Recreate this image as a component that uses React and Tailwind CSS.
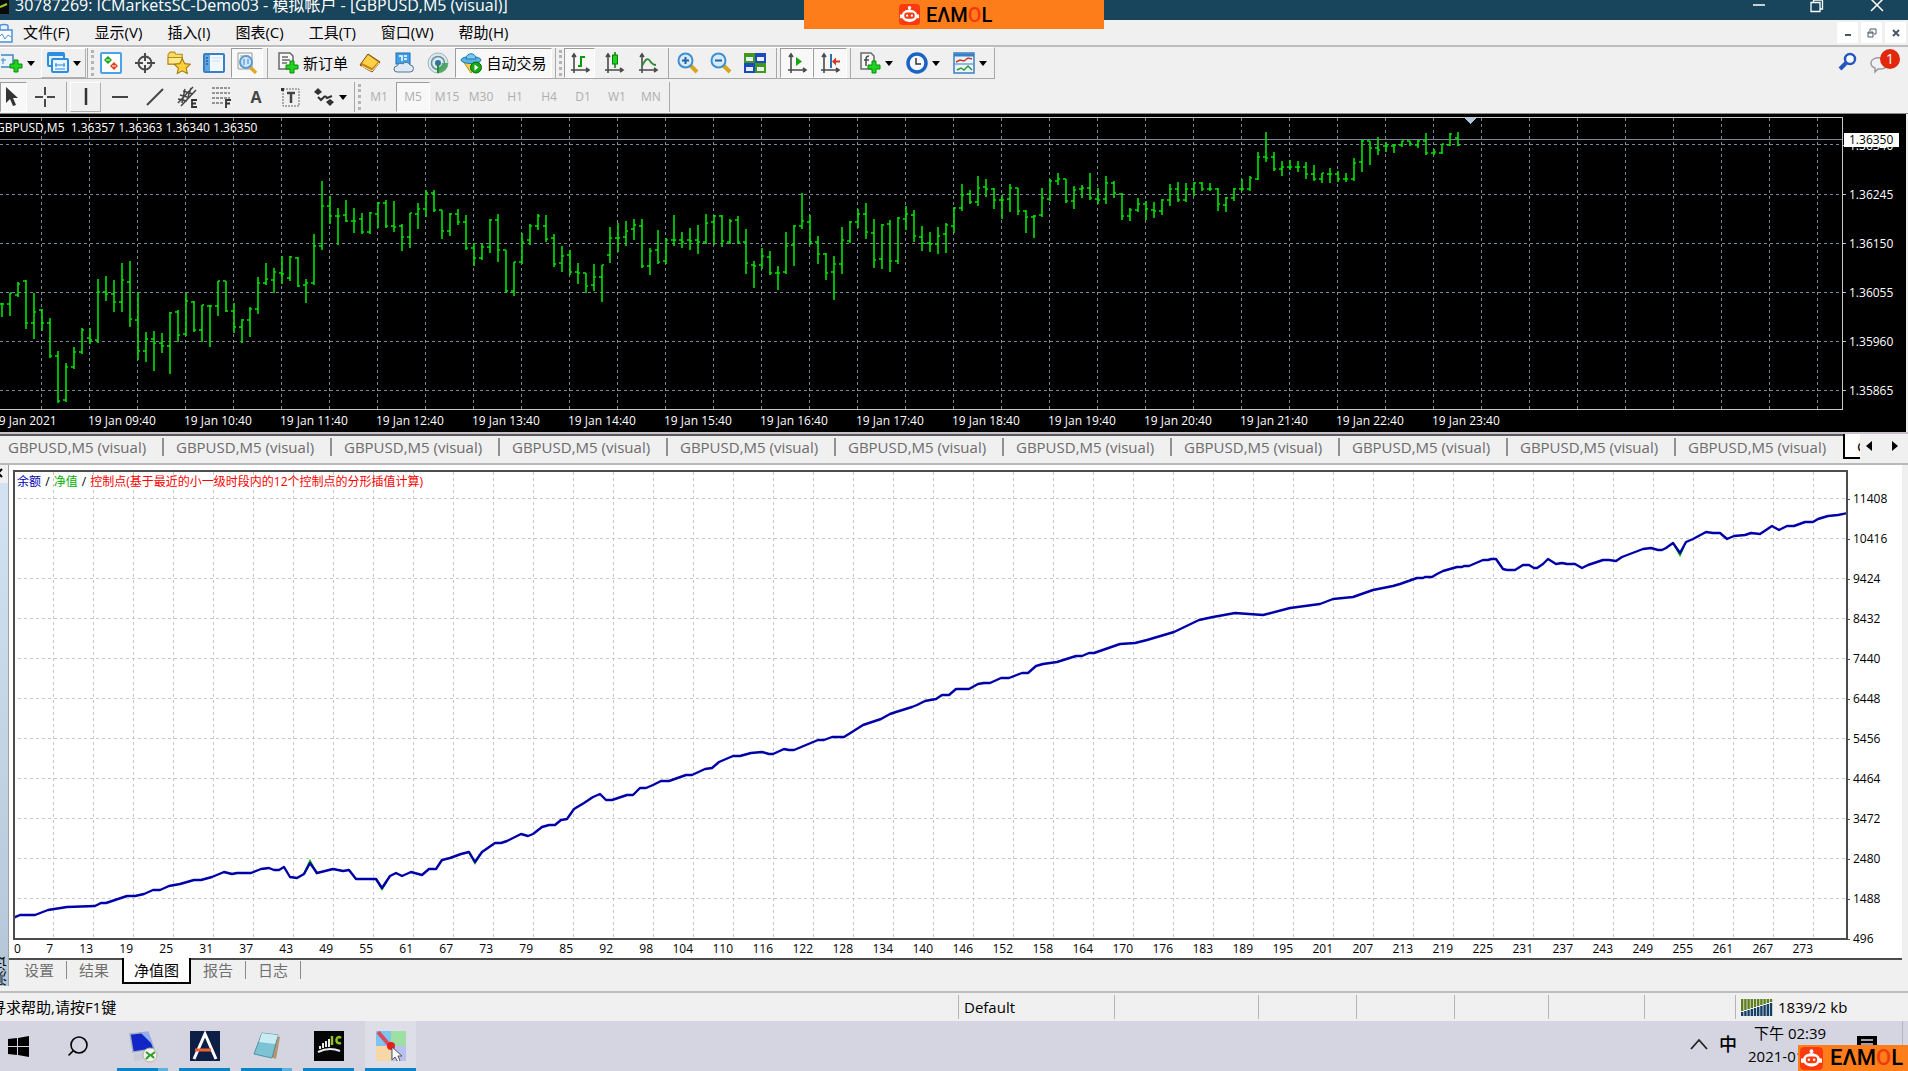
import React, { useState } from 'react';
import { Search } from 'lucide-react';

const menuItems = ['文件(F)', '显示(V)', '插入(I)', '图表(C)', '工具(T)', '窗口(W)', '帮助(H)'];
const timeframes = ['M1', 'M5', 'M15', 'M30', 'H1', 'H4', 'D1', 'W1', 'MN'];
const testerTabs = ['设置', '结果', '净值图', '报告', '日志'];
const prices = ['1.36340', '1.36245', '1.36150', '1.36055', '1.35960', '1.35865'];
const times = [
  '19 Jan 2021', '19 Jan 09:40', '19 Jan 10:40', '19 Jan 11:40', '19 Jan 12:40', '19 Jan 13:40',
  '19 Jan 14:40', '19 Jan 15:40', '19 Jan 16:40', '19 Jan 17:40', '19 Jan 18:40', '19 Jan 19:40',
  '19 Jan 20:40', '19 Jan 21:40', '19 Jan 22:40', '19 Jan 23:40',
];
const balances = [11408, 10416, 9424, 8432, 7440, 6448, 5456, 4464, 3472, 2480, 1488, 496];
const trades = [
  7, 13, 19, 25, 31, 37, 43, 49, 55, 61, 67, 73, 79, 85, 92, 98, 104, 110, 116, 122, 128, 134, 140,
  146, 152, 158, 164, 170, 176, 183, 189, 195, 201, 207, 213, 219, 225, 231, 237, 243, 249, 255,
  261, 267, 273,
];

// [high, low, open, close], three units per pixel, measured down from the top
const bars = [
  [578, 617, 582, 582], [548, 614, 582, 550], [517, 558, 555, 522], [510, 655, 512, 640],
  [548, 683, 640, 605], [598, 660, 600, 640], [625, 740, 640, 738], [724, 875, 738, 872],
  [760, 873, 871, 771], [711, 774, 771, 727], [655, 728, 727, 661], [653, 698, 684, 690],
  [508, 695, 691, 545], [498, 570, 545, 551], [510, 602, 551, 576], [460, 602, 576, 510],
  [454, 648, 517, 628], [547, 748, 631, 722], [667, 752, 722, 688], [664, 780, 688, 699],
  [670, 727, 699, 708], [607, 789, 708, 608], [601, 694, 606, 676], [548, 675, 671, 574],
  [573, 664, 576, 661], [585, 693, 660, 586], [584, 708, 587, 587], [512, 616, 587, 514],
  [513, 602, 514, 602], [579, 665, 602, 650], [628, 696, 650, 631], [590, 677, 631, 596],
  [500, 610, 597, 519], [460, 523, 520, 508], [475, 545, 510, 485], [438, 520, 488, 491],
  [439, 509, 505, 441], [440, 529, 443, 527], [508, 575, 525, 520], [372, 523, 520, 408],
  [213, 416, 409, 287], [259, 340, 289, 318], [293, 402, 318, 317], [270, 334, 316, 334],
  [293, 366, 334, 333], [308, 368, 328, 366], [306, 368, 366, 310], [275, 350, 313, 279],
  [270, 352, 280, 347], [273, 362, 348, 352], [342, 419, 349, 382], [308, 410, 382, 310],
  [280, 355, 312, 298], [240, 318, 298, 249], [240, 304, 250, 301], [300, 385, 301, 364],
  [308, 375, 362, 313], [298, 343, 313, 337], [316, 417, 337, 415], [400, 466, 415, 445],
  [402, 446, 443, 410], [328, 425, 410, 330], [313, 452, 330, 420], [419, 545, 421, 543],
  [456, 556, 543, 457], [368, 458, 456, 396], [341, 402, 390, 349], [313, 358, 348, 318],
  [315, 394, 348, 386], [371, 468, 385, 461], [408, 483, 460, 438], [421, 493, 436, 485],
  [460, 518, 487, 490], [490, 547, 490, 527], [463, 540, 526, 502], [464, 573, 500, 466],
  [350, 455, 436, 385], [340, 424, 385, 385], [334, 405, 382, 362], [327, 388, 358, 346],
  [327, 470, 348, 468], [413, 491, 468, 424], [361, 460, 421, 457], [385, 460, 452, 390],
  [315, 405, 390, 390], [367, 412, 390, 395], [354, 418, 390, 392], [346, 428, 390, 396],
  [312, 400, 395, 340], [316, 402, 335, 318], [316, 408, 318, 392], [328, 400, 395, 333],
  [318, 400, 330, 395], [357, 488, 395, 458], [453, 530, 466, 469], [415, 475, 466, 438],
  [424, 492, 442, 490], [468, 537, 490, 488], [366, 488, 486, 408], [346, 466, 405, 349],
  [250, 354, 349, 334], [315, 402, 336, 395], [379, 458, 395, 431], [430, 507, 432, 489],
  [438, 567, 487, 461], [351, 488, 463, 390], [334, 395, 392, 336], [296, 350, 337, 313],
  [280, 383, 313, 365], [328, 470, 368, 449], [343, 474, 446, 346], [331, 482, 343, 452],
  [321, 458, 454, 325], [287, 357, 326, 313], [300, 392, 316, 378], [348, 420, 380, 400],
  [367, 423, 400, 402], [351, 428, 402, 378], [340, 427, 373, 345], [292, 367, 349, 295],
  [222, 299, 295, 256], [240, 280, 253, 277], [198, 286, 276, 233], [207, 258, 231, 238],
  [235, 294, 237, 270], [254, 323, 270, 269], [222, 303, 268, 233], [233, 313, 235, 302],
  [301, 365, 304, 322], [314, 380, 320, 318], [234, 318, 316, 265], [206, 270, 268, 213],
  [189, 222, 213, 207], [207, 275, 208, 272], [229, 295, 273, 239], [226, 262, 237, 233],
  [189, 268, 233, 265], [235, 278, 266, 269], [198, 280, 268, 218], [214, 262, 219, 250],
  [250, 328, 251, 317], [295, 331, 318, 299], [265, 303, 300, 283], [273, 328, 283, 298],
  [277, 320, 300, 303], [268, 311, 302, 270], [222, 284, 270, 237], [216, 272, 238, 270],
  [219, 273, 270, 236], [217, 255, 236, 220], [217, 240, 220, 236], [219, 240, 236, 236],
  [234, 299, 236, 283], [262, 302, 284, 265], [234, 269, 265, 236], [206, 240, 236, 236],
  [198, 240, 236, 205], [127, 208, 206, 142], [66, 152, 142, 145], [127, 180, 142, 178],
  [153, 194, 178, 172], [150, 177, 172, 172], [153, 182, 172, 170], [156, 203, 170, 193],
  [165, 210, 193, 208], [188, 215, 208, 190], [174, 215, 193, 192], [182, 212, 192, 208],
  [189, 212, 208, 208], [143, 210, 208, 158], [90, 182, 157, 93], [93, 161, 93, 114],
  [82, 131, 114, 119], [97, 122, 108, 108], [102, 125, 109, 104], [92, 108, 106, 94],
  [92, 104, 94, 103], [91, 110, 104, 93], [69, 131, 93, 128], [117, 133, 128, 126],
  [102, 130, 128, 103], [70, 105, 104, 73], [66, 105, 84, 104],
];

const barPath = bars
  .map(([h, l, o, c], i) => {
    const x = i * 8 + 2;
    const y = (v) => Math.round(v / 3);
    return `M${x} ${y(h)}V${y(l) + 1}M${x - 3} ${y(o)}H${x}M${x} ${y(c)}H${x + 2}`;
  })
  .join('');

const balanceLine =
  '13,918 20,915 35,915 48,910 67,907 95,906 101,903 106,903 127,896 135,896 144,894 153,890 160,890 169,886 180,884 194,880 201,880 212,877 224,872 232,874 237,873 251,873 261,869 269,868 274,870 279,870 284,867 290,877 297,878 304,874 310,863 317,873 333,869 343,871 349,870 356,879 376,879 382,888 390,876 396,873 402,876 411,872 422,875 429,869 436,869 442,860 450,858 461,854 469,852 475,862 482,852 495,843 501,843 507,841 521,834 528,836 533,834 542,827 549,825 555,825 561,820 567,819 574,809 584,803 593,797 600,794 606,800 612,800 627,795 633,795 640,788 646,788 653,785 661,781 669,781 686,775 692,775 705,769 712,768 719,762 733,756 740,756 751,753 762,752 769,754 773,754 784,749 789,750 794,750 818,740 824,740 832,737 844,737 852,732 863,725 881,719 890,714 896,712 912,707 917,705 925,701 936,699 942,695 949,695 956,689 969,689 978,684 984,683 990,683 1001,678 1009,678 1022,673 1028,673 1036,666 1043,664 1057,662 1076,656 1082,656 1089,653 1094,653 1120,644 1135,643 1147,640 1174,632 1199,620 1213,617 1235,613 1263,615 1290,608 1320,604 1333,599 1353,597 1373,590 1393,586 1400,584 1417,578 1423,578 1425,577 1432,577 1437,574 1443,571 1457,567 1462,567 1464,566 1469,566 1483,560 1488,560 1491,559 1496,559 1503,569 1507,570 1515,570 1523,565 1529,565 1534,568 1537,568 1543,564 1548,559 1556,564 1562,563 1567,564 1575,564 1582,568 1588,565 1603,560 1609,560 1616,561 1622,557 1643,549 1651,548 1658,550 1662,550 1666,548 1673,543 1680,553 1686,542 1693,539 1706,532 1713,533 1720,533 1727,539 1734,536 1745,535 1751,533 1760,534 1772,526 1779,530 1787,526 1794,526 1805,522 1813,522 1818,519 1828,516 1838,515 1848,513';

function Icon({ children, size = 22 }) {
  return (
    <svg width={size} height={size} viewBox="0 0 22 22" fill="none" className="block shrink-0">
      {children}
    </svg>
  );
}

const Plus = ({ x, y }) => (
  <path
    transform={`translate(${x} ${y})`}
    d="M4 0h4v4h4v4H8v4H4V8H0V4h4z"
    fill="#1fd41f"
    stroke="#0b8a0b"
    strokeWidth="1"
  />
);

const Caret = () => (
  <svg width="8" height="5" viewBox="0 0 8 5" className="shrink-0">
    <path d="M0 0h8L4 5z" fill="#000" />
  </svg>
);

const Axes = () => (
  <path d="M5 3v18M2 18h17M3 5l2-3 2 3M17 16l3 2-3 2" stroke="#4a4a4a" strokeWidth="1.6" />
);

const icons = {
  newChart: (
    <Icon>
      <rect x="-3" y="3" width="15" height="12" fill="#eaf4fd" stroke="#3b86c8" strokeWidth="1.5" />
      <path d="M2 6v6M0 8h5" stroke="#3b86c8" />
      <Plus x={9} y={8} />
    </Icon>
  ),
  profiles: (
    <Icon>
      <rect x="1" y="1" width="16" height="13" rx="1" fill="#dff0ff" stroke="#2b8ce0" strokeWidth="2" />
      <path d="M1 3h16" stroke="#2b8ce0" strokeWidth="2" />
      <rect x="5" y="7" width="16" height="13" rx="1" fill="#e9f5ff" stroke="#2b8ce0" strokeWidth="2" />
      <path d="M8 13h10M9 11v4M17 11v4M8 17h10" stroke="#2b8ce0" />
    </Icon>
  ),
  market: (
    <Icon>
      <rect x="1" y="1" width="20" height="20" rx="1" fill="#fff" stroke="#4aa3e6" strokeWidth="2" />
      <path d="M8 4l4 4-4 4-4-4z" fill="#16a816" />
      <path d="M14 10l4 4-4 4-4-4z" fill="#e8441c" />
      <path d="M6 8h4M12 14h4" stroke="#fff" />
    </Icon>
  ),
  target: (
    <Icon>
      <circle cx="11" cy="11" r="6.5" stroke="#4a4a4a" strokeWidth="2" />
      <path d="M11 1v8M11 13v8M1 11h8M13 11h8" stroke="#4a4a4a" strokeWidth="2" />
    </Icon>
  ),
  favorites: (
    <Icon size={24}>
      <path d="M1 3l2-2h4l1 2h6v9H1z" fill="#f7dc6a" stroke="#b98c1a" />
      <path d="M1 6h13v6H1z" fill="#fbe98c" stroke="#b98c1a" />
      <path d="M14 7l2.3 4.6 5 .6-3.7 3.4 1 5-4.6-2.4-4.6 2.4 1-5-3.7-3.4 5-.6z" fill="#ffd23c" stroke="#a8780c" />
    </Icon>
  ),
  navigator: (
    <Icon>
      <rect x="1" y="2" width="20" height="18" rx="1" fill="#f2f8ff" stroke="#3a7fc4" strokeWidth="2" />
      <path d="M2 3h5v16H2z" fill="#5fa8e4" />
      <path d="M3 6h2M3 9h2M3 12h2" stroke="#123f70" />
      <path d="M9 6h10M9 9h8" stroke="#cfe0f0" />
    </Icon>
  ),
  tester: (
    <Icon>
      <path d="M2 1h14v16H2z" fill="#f8f8f4" stroke="#9a9a9a" />
      <path d="M4 4h9M4 14h6" stroke="#c4b27a" />
      <path d="M14 15l6 6" stroke="#e0a92c" strokeWidth="3.5" />
      <circle cx="10" cy="10" r="6" fill="#cfe8fb" stroke="#5b9bd0" strokeWidth="2" />
      <path d="M8 7v6M12 7v5" stroke="#3a7fc4" />
    </Icon>
  ),
  newOrder: (
    <Icon>
      <path d="M2 1h11l3 3v13H2z" fill="#f6f6f6" stroke="#6a6a6a" strokeWidth="1.5" />
      <path d="M5 5h6M5 8h8M5 11h5" stroke="#6a6a6a" strokeWidth="1.5" />
      <Plus x={9} y={9} />
    </Icon>
  ),
  book: (
    <Icon>
      <path d="M1 13L9 2l12 8-8 10z" fill="#c98410" stroke="#7a4c04" />
      <path d="M3 11l6-8 10 7-6 6z" fill="#ffd04a" />
      <path d="M3 14l10 5 7-8" stroke="#fff3c4" />
    </Icon>
  ),
  cloud: (
    <Icon>
      <rect x="4" y="1" width="14" height="11" fill="#3fa0e8" stroke="#1b6cb8" />
      <path d="M7 4h3v5M12 4h3M12 7h3" stroke="#fff" strokeWidth="1.5" />
      <path d="M5 20h13a3.5 3.5 0 0 0 0-7 4 4 0 0 0-7-1 4 4 0 0 0-6 2 3 3 0 0 0 0 6z" fill="#dfe9f6" stroke="#56749c" />
    </Icon>
  ),
  signal: (
    <Icon>
      <circle cx="11" cy="11" r="10" fill="#dfe9ea" stroke="#9db4b8" />
      <path d="M11 21A10 10 0 0 0 21 11h-6a4 4 0 0 1-4 4z" fill="#4caf50" />
      <circle cx="11" cy="11" r="6.5" stroke="#5f8fa0" strokeWidth="1.5" />
      <circle cx="11" cy="11" r="3" fill="#2f6fb0" />
      <path d="M11 11v10" stroke="#2d8a34" strokeWidth="2" />
    </Icon>
  ),
  auto: (
    <Icon>
      <path d="M3 9l8 12 9-12z" fill="#f3cf4e" stroke="#b38a18" />
      <ellipse cx="11" cy="8" rx="10" ry="3.5" fill="#58b4e4" stroke="#1f78ac" />
      <path d="M6 7c0-7 10-7 10 0z" fill="#7cc9f0" stroke="#1f78ac" />
      <circle cx="16" cy="15.5" r="5.5" fill="#18a818" stroke="#0a6e0a" />
      <path d="M14.5 12.5v6l4-3z" fill="#fff" />
    </Icon>
  ),
  barChart: (
    <Icon>
      <Axes />
      <path d="M9 14h3V5h4" stroke="#0a9a0a" strokeWidth="2" />
    </Icon>
  ),
  candle: (
    <Icon>
      <Axes />
      <path d="M12 0v16" stroke="#0a7a0a" strokeWidth="1.5" />
      <rect x="9.5" y="3" width="5" height="9" fill="#1fd41f" stroke="#0a7a0a" />
    </Icon>
  ),
  lineChart: (
    <Icon>
      <Axes />
      <path d="M5 14c4-8 6-8 8-5s3 4 6 4" stroke="#2d8a34" strokeWidth="1.8" />
    </Icon>
  ),
  zoomIn: (
    <Icon>
      <path d="M13 13l7 7" stroke="#d9a520" strokeWidth="4" />
      <circle cx="8.5" cy="8.5" r="7" fill="#d6ecfb" stroke="#3f8fd0" strokeWidth="2" />
      <path d="M5 8.5h7M8.5 5v7" stroke="#2560a0" strokeWidth="2" />
    </Icon>
  ),
  zoomOut: (
    <Icon>
      <path d="M13 13l7 7" stroke="#d9a520" strokeWidth="4" />
      <circle cx="8.5" cy="8.5" r="7" fill="#d6ecfb" stroke="#3f8fd0" strokeWidth="2" />
      <path d="M5 8.5h7" stroke="#2560a0" strokeWidth="2" />
    </Icon>
  ),
  tile: (
    <Icon>
      <path d="M0 1h11v10H0zM11 11h11v10H11z" fill="#3f9a1c" />
      <path d="M11 1h11v10H11zM0 11h11v10H0z" fill="#1c48c0" />
      <path d="M2 5h7v4H2zM13 5h7v4h-7zM2 15h7v4H2zM13 15h7v4h-7z" fill="#e8f0ff" />
    </Icon>
  ),
  scroll: (
    <Icon>
      <Axes />
      <path d="M10 5v9l6-4.5z" fill="#12a812" />
    </Icon>
  ),
  shift: (
    <Icon>
      <Axes />
      <path d="M12 2v14" stroke="#2f6fb0" strokeWidth="2" />
      <path d="M13 9.5l4-4v3h4v2h-4v3z" fill="#d0381c" />
    </Icon>
  ),
  indicators: (
    <Icon>
      <path d="M2 1h10l3 3v13H2z" fill="#f6f6f6" stroke="#6a6a6a" strokeWidth="1.5" />
      <path d="M10 4c-3 0-3 2-3 5v5M5 8h5" stroke="#4a4a4a" strokeWidth="1.5" />
      <Plus x={9} y={9} />
    </Icon>
  ),
  clock: (
    <Icon>
      <circle cx="11" cy="11" r="9" fill="#f4f9ff" stroke="#1a62c4" strokeWidth="3.5" />
      <path d="M10 6v6h5" stroke="#333" strokeWidth="1.5" />
    </Icon>
  ),
  template: (
    <Icon>
      <rect x="1" y="1" width="20" height="20" fill="#eaf4fd" stroke="#3a7fc4" strokeWidth="1.5" />
      <path d="M1 3h20" stroke="#3a7fc4" strokeWidth="3" />
      <path d="M3 10l4-2 4 1 4-3 4 1" stroke="#d0381c" strokeWidth="1.5" />
      <path d="M2 12h18" stroke="#3a7fc4" />
      <path d="M4 18l4-2 3 2 4-4 4 4" stroke="#2d9a34" strokeWidth="1.5" />
    </Icon>
  ),
  cursor: (
    <Icon>
      <path d="M3 1v16l4-4 3 7 3-1-3-7h5z" fill="#333" />
    </Icon>
  ),
  cross: (
    <Icon>
      <path d="M11 1v8M11 13v8M1 11h8M13 11h8" stroke="#4a4a4a" strokeWidth="2" />
    </Icon>
  ),
  vLine: (
    <Icon>
      <path d="M11 2v17" stroke="#333" strokeWidth="2.5" />
    </Icon>
  ),
  hLine: (
    <Icon>
      <path d="M3 11h16" stroke="#444" strokeWidth="2" />
    </Icon>
  ),
  trend: (
    <Icon>
      <path d="M3 19L19 3" stroke="#444" strokeWidth="2" />
    </Icon>
  ),
  channel: (
    <Icon>
      <path d="M1 17L16 1M4 20L19 4M3 9l7 2M6 5l10 3M1 13l9 2M8 3l-3 14M14 2l-4 12" stroke="#444" strokeWidth="1.5" />
      <path d="M20 14h-5v7h5M15 17.5h4" stroke="#333" strokeWidth="1.8" />
    </Icon>
  ),
  fibo: (
    <Icon>
      <path d="M1 2h18M1 7h18M1 12h18M1 17h11" stroke="#777" strokeWidth="1.5" strokeDasharray="3 1" />
      <path d="M20 14h-5v8M15 17.5h4" stroke="#333" strokeWidth="1.8" />
    </Icon>
  ),
  label: (
    <Icon>
      <rect x="4" y="3" width="16" height="17" stroke="#666" strokeDasharray="2 1" />
      <path d="M2 2h3v3H2z" fill="#333" />
      <path d="M8 7h8M12 7v10" stroke="#444" strokeWidth="2.5" />
    </Icon>
  ),
  arrows: (
    <Icon>
      <path d="M5 2l4 4-4 3-4-3zM17 13l4 3-4 4-4-4z" fill="#333" />
      <path d="M5 11l3 3 4-4M12 10l2 2 5-2" stroke="#333" strokeWidth="2" />
    </Icon>
  ),
};

function Tool({ icon, label, title, caret, pressed, raised, width }) {
  const frame = pressed
    ? 'border-t-[#9c9c9c] border-l-[#9c9c9c] border-r-white border-b-white bg-[#f8f8f8]'
    : raised
      ? 'border-t-white border-l-white border-r-[#b0b0b0] border-b-[#b0b0b0]'
      : 'border-transparent';
  return (
    <button
      type="button"
      aria-label={title || label}
      className={`flex h-[30px] shrink-0 items-center justify-center gap-1 overflow-hidden border ${width} ${frame}`}
    >
      {icons[icon]}
      {label && <span className="text-[15px] leading-5 whitespace-nowrap">{label}</span>}
      {caret && <Caret />}
    </button>
  );
}

const Divider = ({ width = 'w-2' }) => (
  <span className={`flex h-[30px] shrink-0 justify-center ${width}`}>
    <span className="w-px bg-[#a8a8a8]" />
  </span>
);

const Grip = ({ width = 'w-3' }) => (
  <span className={`flex h-[30px] shrink-0 items-center justify-center gap-[3px] ${width}`}>
    <span className="h-[30px] w-px bg-[#a8a8a8]" />
    <span className="h-[26px] border-l-[3px] border-dotted border-[#b4b4b4]" />
  </span>
);

function RobotMark({ size }) {
  return (
    <svg width={size} height={size} viewBox="0 0 22 22" className="shrink-0">
      <rect width="22" height="22" rx="4" fill="#fb3a10" />
      <circle cx="11" cy="4" r="1.8" fill="#fff" />
      <path d="M11 4v4" stroke="#fff" strokeWidth="1.5" />
      <path d="M3 12c0-8 16-8 16 0 0 9-16 9-16 0z" fill="#fff" />
      <path d="M1 11h3v4H1zM18 11h3v4h-3z" fill="#fff" />
      <rect x="5.5" y="9" width="11" height="6.5" rx="3.2" fill="#fb3a10" />
      <circle cx="8.5" cy="12.2" r="1.2" fill="#fff" />
      <circle cx="13.5" cy="12.2" r="1.2" fill="#fff" />
    </svg>
  );
}

const Brand = ({ textSize }) => (
  <span className={`[font-family:Roboto,sans-serif] font-medium text-black ${textSize}`}>
    EΛM<span className="text-[#f5380c]">O</span>L
  </span>
);

function TitleBar() {
  return (
    <header className="flex h-5 items-start overflow-hidden bg-[#18455c] text-white">
      <div className="mt-[-7px] flex h-6 flex-1 items-center gap-[6px]">
        <svg width="9" height="24" viewBox="0 0 9 24">
          <path d="M0 0h9v21H0z" fill="#0a0a0a" />
          <path d="M0 14l7-3" stroke="#9bd12c" strokeWidth="2" />
        </svg>
        <h1 className="text-base leading-6 whitespace-nowrap">
          30787269: ICMarketsSC-Demo03 - 模拟帐户 - [GBPUSD,M5 (visual)]
        </h1>
      </div>
      <div className="flex">
        <button type="button" aria-label="最小化" className="flex w-[58px] justify-center">
          <svg width="14" height="14" viewBox="0 0 14 14"><path d="M1 5h12" stroke="#fff" strokeWidth="1.5" /></svg>
        </button>
        <button type="button" aria-label="还原" className="flex w-[58px] justify-center">
          <svg width="16" height="14" viewBox="0 0 16 14" fill="none" stroke="#fff" strokeWidth="1.3">
            <path d="M2 2.5h9v9H2zM4.5 2V0h9v9H11" />
          </svg>
        </button>
        <button type="button" aria-label="关闭" className="flex w-[62px] justify-center">
          <svg width="14" height="14" viewBox="0 0 14 14"><path d="M1-1l12 12M13-1L1 11" stroke="#fff" strokeWidth="1.5" /></svg>
        </button>
      </div>
    </header>
  );
}

function MenuBar() {
  const control = 'flex h-[21px] w-[21px] items-center justify-center bg-white';
  return (
    <nav className="flex h-[27px] items-center border-b-2 border-[#bdbdbd] bg-[#f0f0f0]">
      <svg width="13" height="20" viewBox="0 0 13 20" fill="none">
        <path d="M-4 7h16v12H-4z" fill="#fff" stroke="#4a90d9" strokeWidth="1.5" />
        <path d="M0 7V3c0-2 8-2 8 0v4" stroke="#4a90d9" strokeWidth="1.5" />
        <path d="M-1 14l3-3 3 5 3-4 3 2" stroke="#4a90d9" />
      </svg>
      <div className="flex flex-1 pb-[2px] pl-[10px] text-[15px] leading-5">
        {menuItems.map((item) => (
          <button key={item} type="button" className="mr-[25px] whitespace-nowrap">
            {item}
          </button>
        ))}
      </div>
      <div className="flex gap-[3px] pr-[2px]">
        <button type="button" aria-label="最小化图表" className={control}>
          <svg width="8" height="8" viewBox="0 0 8 8"><path d="M1 6h6" stroke="#4a5866" strokeWidth="2" /></svg>
        </button>
        <button type="button" aria-label="还原图表" className={control}>
          <svg width="10" height="10" viewBox="0 0 10 10" fill="none" stroke="#4a5866"><path d="M1 4h5v5H1zM3 3V1h6v5H7M1 5h5" /></svg>
        </button>
        <button type="button" aria-label="关闭图表" className={control}>
          <svg width="8" height="8" viewBox="0 0 8 8"><path d="M1 1l6 6M7 1L1 7" stroke="#4a5866" strokeWidth="2" /></svg>
        </button>
      </div>
    </nav>
  );
}

function MainToolbar() {
  return (
    <div className="flex h-[33px] items-start bg-[#f0f0f0] pr-2">
      <div className="flex h-8 items-center border-t border-r border-b border-t-white border-r-[#a8a8a8] border-b-[#a8a8a8]">
        <Tool icon="newChart" title="新图表" caret width="w-[41px] justify-start!" />
        <Tool icon="profiles" title="配置文件" caret raised width="w-[45px]" />
        <Grip width="w-[9px]" />
        <Tool icon="market" title="市场报价" width="w-[32px]" />
        <Tool icon="target" title="数据窗口" width="w-[35px]" />
        <Tool icon="favorites" title="收藏夹" width="w-[34px]" />
        <Tool icon="navigator" title="导航" width="w-[35px]" />
        <Tool icon="tester" title="策略测试" pressed width="w-[32px]" />
        <Divider width="w-[9px]" />
        <Tool icon="newOrder" label="新订单" width="w-[81px]" />
        <Tool icon="book" title="MetaEditor" width="w-[33px]" />
        <Tool icon="cloud" title="云服务" width="w-[34px]" />
        <Tool icon="signal" title="信号" width="w-[35px]" />
        <Tool icon="auto" label="自动交易" pressed width="w-[97px]" />
        <Grip width="w-[12px]" />
        <Tool icon="barChart" title="柱状图" pressed width="w-[31px]" />
        <Tool icon="candle" title="阴阳烛" width="w-[37px]" />
        <Tool icon="lineChart" title="折线图" width="w-[32px]" />
        <Divider />
        <Tool icon="zoomIn" title="放大" width="w-[32px]" />
        <Tool icon="zoomOut" title="缩小" width="w-[34px]" />
        <Tool icon="tile" title="平铺" width="w-[34px]" />
        <Divider />
        <Tool icon="scroll" title="自动滚动" pressed width="w-[33px]" />
        <Tool icon="shift" title="图表平移" pressed width="w-[34px]" />
        <Divider width="w-[6px]" />
        <Tool icon="indicators" title="指标" caret width="w-[46px]" />
        <Tool icon="clock" title="时间周期" caret width="w-[47px]" />
        <Tool icon="template" title="模板" caret width="w-[48px]" />
      </div>
      <div className="ml-auto flex items-center gap-3 pt-[2px]">
        <button type="button" aria-label="搜索">
          <svg width="20" height="20" viewBox="0 0 20 20" fill="none">
            <path d="M8 11l-6 6" stroke="#2456c0" strokeWidth="4" />
            <circle cx="12" cy="7" r="5" fill="#fff" stroke="#2456c0" strokeWidth="2.5" />
          </svg>
        </button>
        <button type="button" aria-label="通知" className="relative h-[26px] w-[30px]">
          <svg width="22" height="22" viewBox="0 0 22 22" className="mt-1">
            <path d="M1 10c0-7 16-7 16 0s-7 6-9 6l-3 3v-4c-3-1-4-3-4-5z" fill="#eef2f6" stroke="#9a9a9a" strokeWidth="1.5" />
          </svg>
          <span className="absolute top-0 right-0 h-5 w-5 rounded-full bg-[#e2280c] text-center text-sm leading-5 text-white">
            1
          </span>
        </button>
      </div>
    </div>
  );
}

function DrawingToolbar() {
  const [active, setActive] = useState('M5');
  return (
    <div className="flex h-[34px] items-start border-b border-[#8a8a8a] bg-[#f0f0f0] pt-[2px]">
      <Tool icon="cursor" title="光标" pressed width="w-[27px]" />
      <Tool icon="cross" title="十字线" width="w-[36px]" />
      <Divider width="w-[7px]" />
      <Tool icon="vLine" title="垂直线" raised width="w-[31px]" />
      <Tool icon="hLine" title="水平线" width="w-[37px]" />
      <Tool icon="trend" title="趋势线" width="w-[33px]" />
      <Tool icon="channel" title="等距通道" width="w-[34px]" />
      <Tool icon="fibo" title="斐波那契" width="w-[34px]" />
      <button type="button" className="h-[30px] w-[34px] text-base font-bold text-[#444]">A</button>
      <Tool icon="label" title="文本标签" width="w-[34px]" />
      <Tool icon="arrows" title="箭头" caret width="w-[45px]" />
      <Grip width="w-[10px]" />
      {timeframes.map((tf) => (
        <button
          key={tf}
          type="button"
          onClick={() => setActive(tf)}
          className={`h-[30px] w-[34px] border text-xs text-[#aeaeae] ${
            tf === active ? 'border-t-[#9c9c9c] border-l-[#9c9c9c] border-r-white border-b-white bg-[#f8f8f8]' : 'border-transparent'
          }`}
        >
          {tf}
        </button>
      ))}
      <Divider width="w-[3px]" />
    </div>
  );
}

function PriceChart() {
  return (
    <section className="mr-[2px] flex h-[318px] bg-black pt-[3px] text-xs leading-4 text-white">
      <div className="min-w-0 flex-1">
        <div className="relative h-[293px] overflow-hidden border-t border-r border-b border-[#c8c8c8]">
          <svg width="100%" height="291" className="block" shapeRendering="crispEdges">
            <g transform="translate(0 -118)" stroke="#778899" strokeDasharray="3 3">
              {Array.from({ length: 38 }, (_, i) => (
                <line key={i} x1={41.5 + i * 48} x2={41.5 + i * 48} y1="118" y2="409" />
              ))}
              {[144, 194, 243, 292, 341, 390].map((y) => (
                <line key={y} x1="0" x2="100%" y1={y + 0.5} y2={y + 0.5} />
              ))}
            </g>
            <line x1="0" x2="100%" y1="21.5" y2="21.5" stroke="#778899" />
            <path transform="translate(0 -8)" d={barPath} stroke="#00e400" strokeWidth="1.6" fill="none" shapeRendering="auto" />
            <path d="M1464 0h12l-6 6z" fill="#b0c4de" />
          </svg>
          <p className="absolute top-[2px] left-[-4px] whitespace-pre">GBPUSD,M5  1.36357 1.36363 1.36340 1.36350</p>
        </div>
        <div className="ml-[-8px] flex overflow-hidden">
          {times.map((t) => (
            <span key={t} className="w-24 shrink-0 pt-[3px] whitespace-nowrap">{t}</span>
          ))}
        </div>
      </div>
      <div className="relative w-[63px] pt-1">
        {prices.map((p) => (
          <div key={p} className="flex h-[49px] items-center gap-[3px]">
            <span className="h-px w-[3px] bg-[#c8c8c8]" />
            {p}
          </div>
        ))}
        <span className="absolute top-4 left-[1px] w-[55px] bg-white pl-[5px] leading-[14px] text-black">1.36350</span>
      </div>
    </section>
  );
}

function ChartTabs() {
  return (
    <div className="flex h-[33px] items-start border-t-2 border-b-2 border-t-[#c9c0cc] border-b-[#b9b9b9] bg-[#f0f0f0] text-[15px] text-[#6c6c6c]">
      <div className="flex min-w-0 flex-1 overflow-hidden border-t-2 border-[#5a5a5a]">
        {Array.from({ length: 11 }, (_, i) => (
          <button key={i} type="button" className="flex h-[22px] w-42 shrink-0 items-center justify-between pl-2 leading-[22px] whitespace-nowrap">
            GBPUSD,M5 (visual)
            {i < 10 && <span className="mr-1 h-[18px] w-[2px] bg-[#909090]" />}
          </button>
        ))}
      </div>
      <button type="button" className="h-[25px] w-[17px] overflow-hidden border-b-2 border-l-2 border-black bg-white pl-3 text-left leading-6 text-black">
        G
      </button>
      <div className="flex h-6 w-12 items-center justify-between pr-[10px] pl-[6px]">
        <button type="button" aria-label="上一个">
          <svg width="6" height="10" viewBox="0 0 6 10"><path d="M6 0v10L0 5z" /></svg>
        </button>
        <button type="button" aria-label="下一个">
          <svg width="6" height="10" viewBox="0 0 6 10"><path d="M0 0v10l6-5z" /></svg>
        </button>
      </div>
    </div>
  );
}

function Tester() {
  const [active, setActive] = useState('净值图');
  const nextActive = testerTabs.indexOf(active) - 1;
  return (
    <section className="flex bg-[#f0f0f0] pr-[6px]">
      <aside className="flex w-2 shrink-0 flex-col overflow-hidden">
        <button type="button" aria-label="关闭测试" className="h-[18px]">
          <svg width="8" height="12" viewBox="0 0 8 12"><path d="M-6 1l8 8M2 1l-8 8" stroke="#000" strokeWidth="2" /></svg>
        </button>
        <div className="flex flex-1 items-end justify-end bg-linear-to-b from-[#d3e3f3] to-[#b4c6d8]">
          <span className="rotate-180 text-[15px] leading-4 [writing-mode:vertical-rl]">测试</span>
        </div>
      </aside>
      <div className="min-w-0 flex-1 border-l border-[#a0a0a0]">
        <div className="flex border-b-2 border-[#4c4c4c] bg-white pt-[5px] pl-1 text-xs leading-4">
          <div className="min-w-0 flex-1">
            <div className="relative h-[470px] overflow-hidden border-2 border-[#4c4c4c]">
              <svg width="100%" height="466" className="block">
                <g transform="translate(-15 -472)" fill="none">
                  <g stroke="#c8c8c8" strokeDasharray="3 3" shapeRendering="crispEdges">
                    {trades.map((n, i) => (
                      <line key={n} x1={53.5 + i * 40} x2={53.5 + i * 40} y1="472" y2="938" />
                    ))}
                    {balances.slice(0, 11).map((n, i) => (
                      <line key={n} x1="0" x2="101%" y1={498.5 + i * 40} y2={498.5 + i * 40} />
                    ))}
                  </g>
                  <path d="M304 874l6-13 7 13M376 879l6 10 5-8M470 854l5 9 5-9M1675 546l5 9 4-9" stroke="#00b400" strokeWidth="2" />
                  <polyline points={balanceLine} stroke="#0000a8" strokeWidth="2.4" strokeLinejoin="round" />
                </g>
              </svg>
              <p className="absolute top-[2px] left-[2px] whitespace-pre text-black">
                <span className="text-[#0000b0]">余额</span>
                <span className="px-px"> / </span>
                <span className="text-[#00b000]">净值</span>
                <span className="px-px"> / </span>
                <span className="text-[#ff0000]">控制点(基于最近的小一级时段内的12个控制点的分形插值计算)</span>
              </p>
            </div>
            <div className="flex h-[18px] items-center overflow-hidden text-right">
              {trades.map((n, i) => (
                <span key={n} className="flex w-10 shrink-0 justify-end">
                  {i === 0 && <span className="mr-auto pl-px">0</span>}
                  {n}
                </span>
              ))}
            </div>
          </div>
          <div className="-mb-1 w-[54px] pt-[9px]">
            {balances.map((n) => (
              <div key={n} className="flex h-10 items-center gap-[3px]">
                <span className="h-px w-[2px] bg-[#4c4c4c]" />
                {n}
              </div>
            ))}
          </div>
        </div>
        <div className="flex h-[26px] pl-[3px] text-[15px] leading-5 text-[#707070]">
          {testerTabs.map((tab, i) => (
            <button
              key={tab}
              type="button"
              onClick={() => setActive(tab)}
              className={
                tab === active
                  ? 'mt-[-2px] h-[26px] w-[69px] border-2 border-t-0 border-black bg-white text-black'
                  : 'flex h-5 w-[55px] items-center pl-3'
              }
            >
              {tab}
              {tab !== active && i !== nextActive && <span className="ml-3 h-[18px] w-px bg-[#8a8a8a]" />}
            </button>
          ))}
        </div>
      </div>
    </section>
  );
}

function StatusBar() {
  const cell = 'h-6 border-l border-[#b4b4b4]';
  return (
    <footer className="mt-[5px] flex h-[30px] items-center border-t-2 border-[#bdbdbd] bg-[#f0f0f0] text-[15px] leading-6">
      <p className="ml-[-9px] min-w-0 flex-1 whitespace-nowrap">寻求帮助,请按F1键</p>
      <p className={`w-[156px] pl-[5px] ${cell}`}>Default</p>
      <span className={`w-[144px] ${cell}`} />
      <span className={`w-[98px] ${cell}`} />
      <span className={`w-[98px] ${cell}`} />
      <span className={`w-[94px] ${cell}`} />
      <span className={`w-24 ${cell}`} />
      <span className={`w-[91px] ${cell}`} />
      <div className={`flex w-[173px] items-center gap-[5px] pl-[5px] ${cell}`}>
        <svg width="32" height="17" viewBox="0 0 32 17">
          {Array.from({ length: 10 }, (_, i) => (
            <g key={i}>
              <rect x={i * 3.2} y="0" width="2.4" height={12 - i} fill="#5f7d1c" />
              <rect x={i * 3.2} y={13 - i} width="2.4" height={4 + i} fill="#163f66" />
            </g>
          ))}
        </svg>
        1839/2 kb
      </div>
    </footer>
  );
}

const apps = [
  {
    name: '远程桌面',
    icon: (
      <svg width="30" height="32" viewBox="0 0 30 32">
        <path d="M2 3l18-2 6 17-21 3z" fill="#1226c8" stroke="#a4aec0" strokeWidth="1.5" />
        <path d="M13 2l7-1 4 12z" fill="#8fb0f8" />
        <path d="M6 23l12-2 2 6-14 3z" fill="#c8ccd4" />
        <circle cx="22" cy="24" r="7" fill="#f2f2ea" stroke="#b4b4a4" />
        <path d="M18 21l4 3-4 4M27 21l-4 3 3 3" stroke="#2c9a2c" strokeWidth="2" fill="none" />
      </svg>
    ),
  },
  {
    name: 'AvaTrade',
    icon: (
      <svg width="30" height="30" viewBox="0 0 30 30">
        <rect width="30" height="30" fill="#0d1f44" />
        <path d="M4 28L15 3l11 25" stroke="#fff" strokeWidth="3" fill="none" />
        <path d="M5 19h16" stroke="#f2622e" strokeWidth="3" />
      </svg>
    ),
  },
  {
    name: '记事本',
    icon: (
      <svg width="30" height="30" viewBox="0 0 30 30">
        <path d="M10 3l18 3-4 22-6-2z" fill="#b89468" />
        <path d="M10 2l16 2-6 23-18-4z" fill="#7cc4d4" stroke="#4f8fa4" />
        <path d="M10 2l16 2-3 9-16-2z" fill="#c8ecf2" />
      </svg>
    ),
  },
  {
    name: 'IC Markets',
    icon: (
      <svg width="30" height="30" viewBox="0 0 30 30">
        <rect width="30" height="30" fill="#050505" />
        <path d="M4 21c8-4 15-4 22-1M6 18v-3M9 17v-5M12 16v-6M15 16V8" stroke="#e8e8e8" strokeWidth="2" fill="none" />
        <path d="M18 5v9M27 7c-5-4-7 7 0 5" stroke="#8fc41f" strokeWidth="2.5" fill="none" />
      </svg>
    ),
  },
  {
    name: '录屏',
    icon: (
      <svg width="30" height="30" viewBox="0 0 30 30">
        <path d="M0 0h15v15H0z" fill="#7fc4f0" />
        <path d="M15 0h15v15H15z" fill="#9ee0a4" />
        <path d="M0 15h15v15H0z" fill="#f6d8a8" />
        <path d="M15 15h15v15H15z" fill="#b8c0f0" />
        <path d="M2 1l13 15" stroke="#d84a5c" strokeWidth="4" />
        <circle cx="15" cy="15" r="4" fill="#e81c1c" />
        <path d="M16 16v13l3-3 3 5 2-1-2-5h4z" fill="#fff" stroke="#555" />
      </svg>
    ),
  },
];

function Taskbar() {
  return (
    <nav className="flex h-[50px] items-stretch bg-[#d5d5e2]">
      <button type="button" aria-label="开始" className="flex w-9 items-center justify-center">
        <svg width="21" height="21" viewBox="0 0 21 21">
          <path d="M0 3l9-1v8H0zM10 2l11-2v10H10zM0 11h9v8l-9-1zM10 11h11v10l-11-2z" />
        </svg>
      </button>
      <button type="button" aria-label="搜索" className="mr-[-2px] flex w-[83px] items-center justify-center">
        <Search size={24} strokeWidth={1.6} className="-scale-x-100" />
      </button>
      {apps.map((app, i) => (
        <button
          key={app.name}
          type="button"
          aria-label={app.name}
          className={`mr-[11px] flex w-[51px] flex-col items-center justify-between pt-[10px] ${i === 4 ? 'bg-[#dedee9]' : ''}`}
        >
          {app.icon}
          <span className="flex h-[3px] w-full bg-[#0a84c6]">
            {i % 2 === 0 && i < 4 && <span className="ml-auto w-[10px] bg-[#5fb0dc]" />}
          </span>
        </button>
      ))}
      <div className="ml-auto flex">
        <button type="button" aria-label="显示隐藏的图标" className="w-[30px] pb-1 pl-[6px]">
          <svg width="18" height="12" viewBox="0 0 18 12"><path d="M1 11l8-9 8 9" stroke="#222" strokeWidth="1.8" fill="none" /></svg>
        </button>
        <button type="button" className="w-[28px] pb-1 text-lg font-medium">中</button>
        <div className="w-[109px] pt-[1px] pl-[6px] text-[15px] leading-[23px]">
          <p className="pl-[6px]">下午 02:39</p>
          <p>2021-01-20</p>
        </div>
        <button type="button" aria-label="操作中心" className="flex w-[51px] justify-start pt-[15px] pl-[6px]">
          <svg width="20" height="20" viewBox="0 0 20 20">
            <path d="M0 0h20v15H8l-4 4v-4H0z" />
            <path d="M4 4h12M4 8h12" stroke="#d5d5e2" strokeWidth="1.5" />
          </svg>
        </button>
        <span className="mr-[5px] w-px bg-[#b4b4c4]" />
      </div>
    </nav>
  );
}

export default function App() {
  return (
    <div className="relative overflow-hidden bg-[#f0f0f0] text-black [font-family:'Open_Sans','Noto_Sans_CJK_SC',sans-serif]">
      <TitleBar />
      <MenuBar />
      <MainToolbar />
      <DrawingToolbar />
      <PriceChart />
      <ChartTabs />
      <Tester />
      <StatusBar />
      <Taskbar />

      {/* Watermarks */}
      <div className="absolute top-0 left-1/2 flex h-[29px] w-[300px] -translate-x-1/2 items-center gap-[6px] bg-[#fd7d1b] pl-[95px]">
        <RobotMark size={21} />
        <Brand textSize="text-[20px] leading-6" />
      </div>
      <div className="absolute right-0 bottom-0 flex h-[26px] w-[110px] items-center gap-[7px] bg-[#fd7d1b] pl-[2px]">
        <RobotMark size={23} />
        <Brand textSize="text-[22px] leading-6" />
      </div>
    </div>
  );
}
